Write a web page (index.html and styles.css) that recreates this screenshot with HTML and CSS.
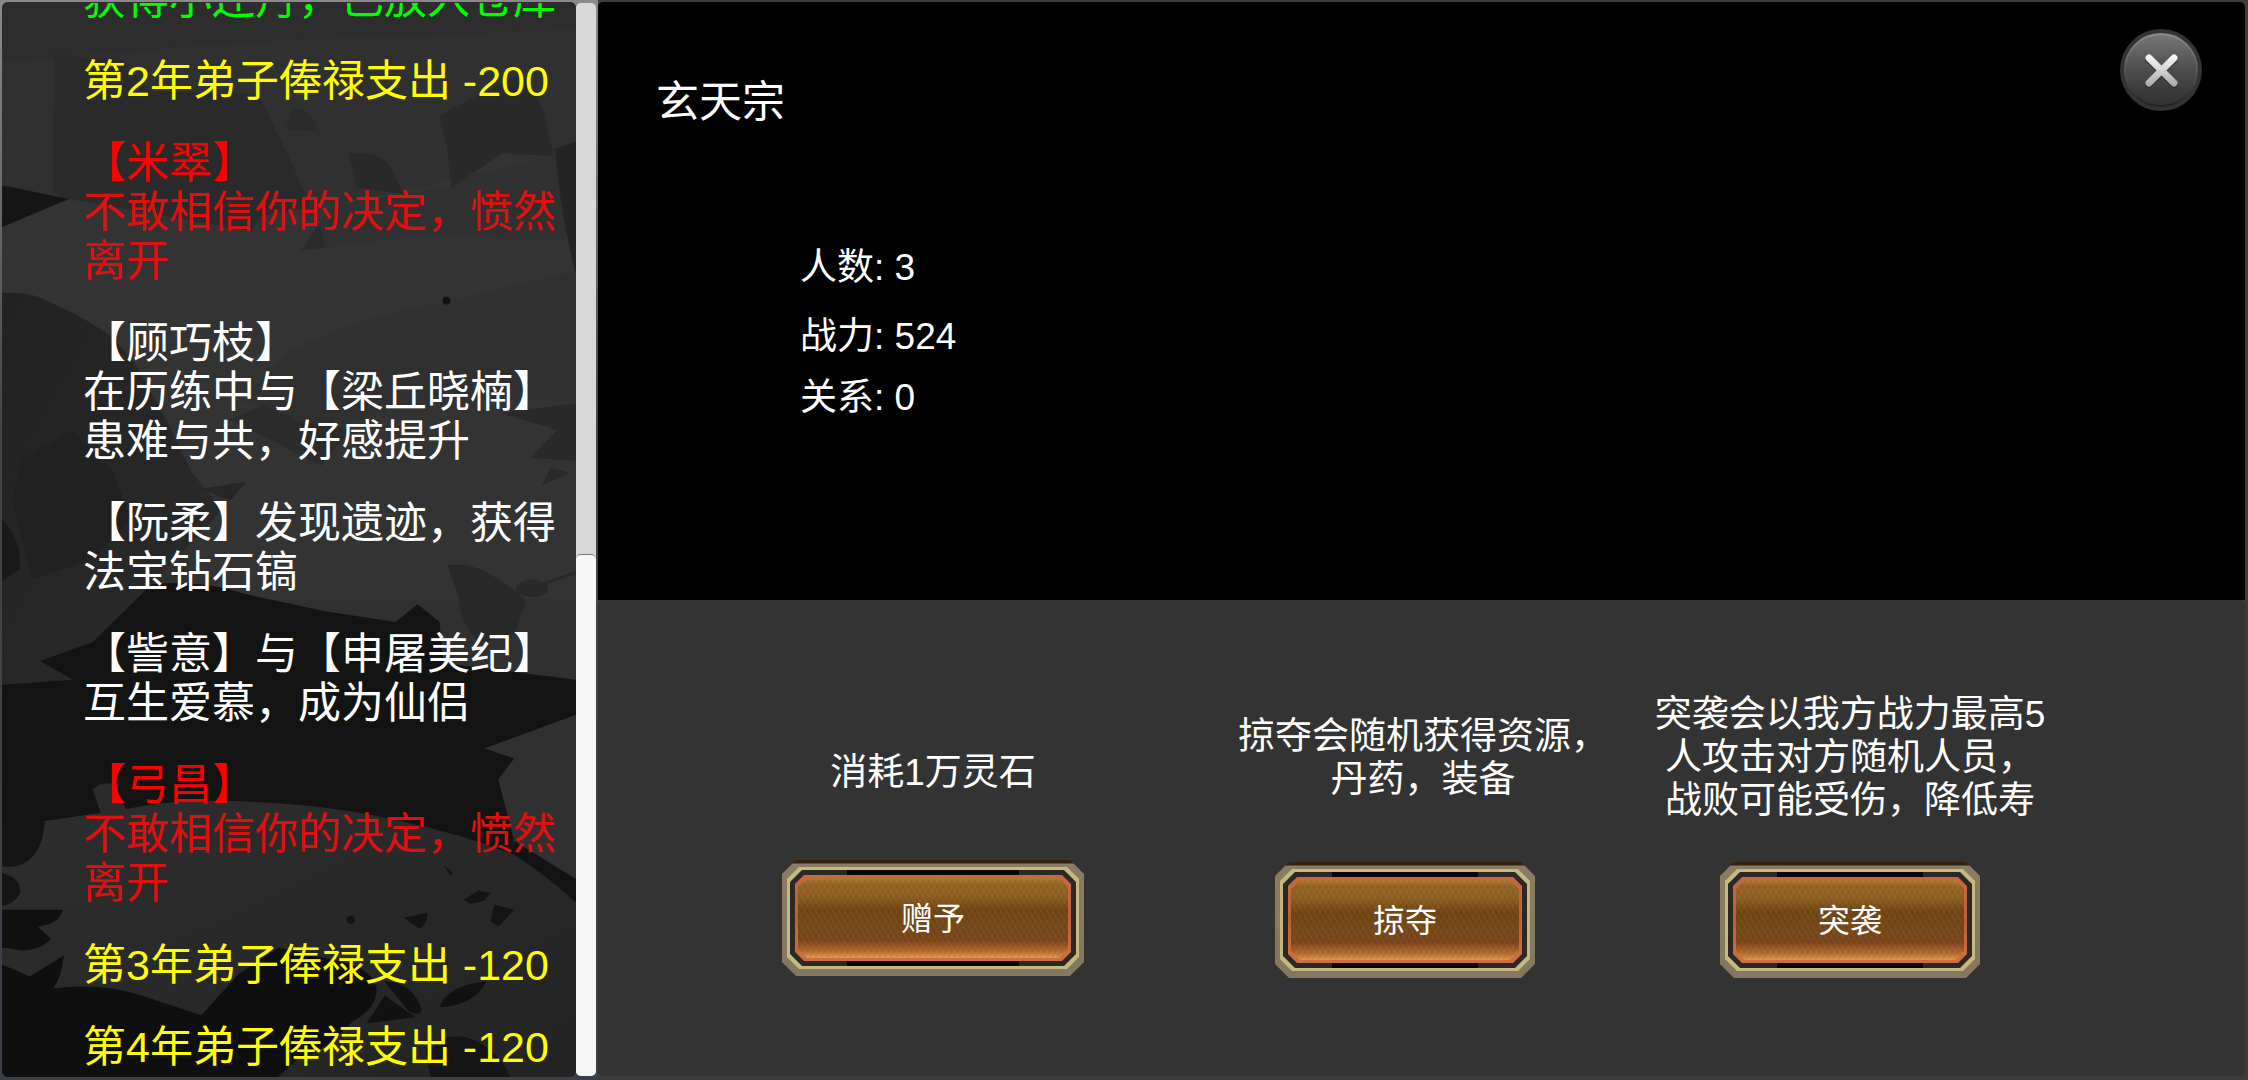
FILE: index.html
```html
<!DOCTYPE html>
<html lang="zh-CN">
<head>
<meta charset="UTF-8">
<meta name="viewport" content="width=device-width, initial-scale=1.0">
<title>玄天宗</title>
<link rel="stylesheet" href="styles.css">
</head>
<body>
<div class="game">
    <aside class="log">
        <svg class="log-art" viewBox="0 0 576 1080" preserveAspectRatio="none" aria-hidden="true">
            <defs>
                <linearGradient id="hill" x1="0" y1="0" x2="1" y2="1">
                    <stop offset="0" stop-color="#2e2e2e"/>
                    <stop offset="1" stop-color="#232323"/>
                </linearGradient>
                <linearGradient id="cliff" x1="0" y1="0" x2="1" y2="1">
                    <stop offset="0" stop-color="#222"/>
                    <stop offset="1" stop-color="#2b2b2b"/>
                </linearGradient>
            </defs>
            <rect width="576" height="1080" fill="#303030"/>
            <!-- far mountains -->
            <path fill="#2d2d2d" d="M0 0H576V28L250 40L0 60Z"/>
            <path fill="#2a2a2a" d="M53 53L120 58L150 90L257 93L290 160L320 230L345 320L200 300L52 190Z"/>
            <path fill="#333" d="M576 150L502 152L451 186L330 205L300 250L420 235L576 240V600H190L180 480L110 337L40 298L0 292V226L67 198L250 230L260 215L400 190Z"/>
            <path fill="#303030" d="M290 350Q360 315 450 300L576 270V400L420 400L330 430L240 400Z"/>
            <path fill="#292929" d="M439 114L450 108L520 72L542 105L554 155L502 152L451 186L447 150Z"/>
            <path fill="#292929" d="M348 152Q380 148 391 168L403 193L356 186Z"/>
            <path fill="#2b2b2b" d="M290 110Q308 100 318 130L285 128Z"/>
            <path fill="#242424" d="M555 148L576 140V275Q560 210 555 148Z"/>
            <path fill="#151515" d="M0 184L67 198L0 226Z"/>
            <circle cx="446" cy="300" r="4" fill="#111"/>
            <!-- cliff on the left -->
            <path fill="url(#cliff)" d="M0 292Q30 292 40 298Q90 320 110 337Q135 360 146 386Q160 410 170 430L190 472L221 510L150 585L91 643L38 662L71 681L0 686Z"/>
            <path fill="#212121" d="M20 460L70 430L110 470L130 520L90 560L30 580L10 500Z"/>
            <path fill="#2b2b2b" d="M228 420L262 405L300 422L350 430L320 466L270 440Z"/>
            <path fill="#262626" d="M200 489L245 482L229 501Z"/>
            <path fill="#292929" d="M500 413L576 403V461L530 458L557 430Z"/>
            <path fill="#292929" d="M550 468L569 473L542 486Z"/>
            <path fill="#191919" d="M0 520Q20 540 18 570L0 582Z"/>
            <!-- hanging leaf -->
            <path fill="#282828" d="M447 566Q470 562 495 578Q515 590 526 602L514 636Q500 642 478 642Q458 620 459 600Z"/>
            <ellipse cx="532" cy="589" rx="16" ry="9" fill="#292929"/>
            <path stroke="#292929" stroke-width="3" fill="none" d="M515 595L550 582L576 573"/>
            <!-- black ridge -->
            <path fill="#131313" d="M0 686L71 681L38 662L91 643L150 585Q200 580 245 595L324 612L395 623L417 605L439 623L443 664L576 681V716L484 750L514 760L498 781L514 843L576 881V905L514 857L395 822L237 803L119 812L0 829Z"/>
            <path fill="url(#hill)" d="M0 829L119 812Q170 800 237 803Q330 806 395 822Q460 835 514 857Q550 880 576 905V1080H0Z"/>
            <path fill="#2b2b2b" d="M91 791Q100 782 112 786L125 812L100 818Z"/>
            <path fill="#141414" d="M0 829L43 822Q42 845 32 857Q20 872 0 868Z"/>
            <path fill="#141414" d="M0 875Q20 880 18 896Q10 908 0 908Z"/>
            <path fill="#101010" d="M0 912L61 912Q58 926 36 929L49 941Q40 952 20 953L0 950Z"/>
            <!-- foreground foliage -->
            <path fill="#0f0f0f" d="M0 967L28 979L62 958Q60 980 51 991Q100 985 140 998L200 1018L237 977L277 950L340 964Q370 970 376 990Q376 1012 352 1024L336 1040Q310 1060 297 1062L277 1080H0Z"/>
            <path fill="#111" d="M384 984Q412 984 421 1012Q420 1020 408 1014Z"/>
            <path fill="#111" d="M439 1010Q446 988 486 984Q474 1008 439 1010Z"/>
            <path fill="#111" d="M384 998L366 1026L415 1020Z"/>
            <path fill="#151515" d="M425 1052Q450 1032 474 1043Q500 1055 510 1080H430Z"/>
            <path fill="#141414" d="M463 902L478 893L490 895L484 903L470 906Z"/>
            <path fill="#141414" d="M403 920L427 915Q428 925 419 931Z"/>
            <path fill="#141414" d="M494 907L514 912L498 929L490 923Z"/>
            <circle cx="350" cy="922" r="4" fill="#141414"/>
            <path fill="#141414" d="M444 868L452 874L450 878Z"/>
        </svg>
        <div class="log-list">
            <p class="entry gain">获得小还丹，已放入仓库</p>
            <p class="entry cost">第2年弟子俸禄支出 -200</p>
            <p class="entry leave"><span class="name">【米翠】</span><br>不敢相信你的决定，愤然离开</p>
            <p class="entry">【顾巧枝】<br>在历练中与【梁丘晓楠】患难与共，好感提升</p>
            <p class="entry">【阮柔】发现遗迹，获得法宝钻石镐</p>
            <p class="entry">【訾意】与【申屠美纪】互生爱慕，成为仙侣</p>
            <p class="entry leave"><span class="name">【弓昌】</span><br>不敢相信你的决定，愤然离开</p>
            <p class="entry cost">第3年弟子俸禄支出 -120</p>
            <p class="entry cost">第4年弟子俸禄支出 -120</p>
        </div>
        <div class="scrollbar">
            <div class="thumb"></div>
        </div>
    </aside>

    <main class="sect">
        <section class="info">
            <div class="info-text">
                <h1>玄天宗</h1>
                <ul class="stats">
                    <li>人数: 3</li>
                    <li>战力: 524</li>
                    <li>关系: 0</li>
                </ul>
            </div>
            <button class="close" aria-label="关闭">
                <svg viewBox="0 0 82 82" aria-hidden="true">
                    <defs>
                        <linearGradient id="disc" x1="0" y1="0" x2="0" y2="1">
                            <stop offset="0" stop-color="#777"/>
                            <stop offset="0.5" stop-color="#4c4c4c"/>
                            <stop offset="1" stop-color="#303030"/>
                        </linearGradient>
                        <linearGradient id="rim" x1="0" y1="0" x2="0" y2="1">
                            <stop offset="0" stop-color="#8c8c8c"/>
                            <stop offset="1" stop-color="#222"/>
                        </linearGradient>
                        <linearGradient id="cross" gradientUnits="userSpaceOnUse" x1="0" y1="24" x2="0" y2="58">
                            <stop offset="0" stop-color="#fff"/>
                            <stop offset="1" stop-color="#a8a8a8"/>
                        </linearGradient>
                    </defs>
                    <circle cx="41" cy="41" r="41" fill="#333"/>
                    <circle cx="41" cy="41" r="36" fill="url(#disc)" stroke="url(#rim)" stroke-width="2"/>
                    <path d="M29 30L54 55M54 30L29 55" stroke="#222" stroke-width="8" stroke-linecap="round" opacity="0.6"/>
                    <path d="M29 29L54 54M54 29L29 54" stroke="url(#cross)" stroke-width="7" stroke-linecap="round"/>
                </svg>
            </button>
        </section>

        <section class="actions">
            <div class="action gift">
                <p class="desc">消耗1万灵石</p>
                <button class="btn"><span class="edge"><span class="gap"><span class="line"><span class="face">赠予</span></span></span></span></button>
            </div>
            <div class="action plunder">
                <p class="desc">掠夺会随机获得资源，丹药，装备</p>
                <button class="btn"><span class="edge"><span class="gap"><span class="line"><span class="face">掠夺</span></span></span></span></button>
            </div>
            <div class="action raid">
                <p class="desc">突袭会以我方战力最高5人攻击对方随机人员，战败可能受伤，降低寿</p>
                <button class="btn"><span class="edge"><span class="gap"><span class="line"><span class="face">突袭</span></span></span></span></button>
            </div>
        </section>
    </main>
</div>
</body>
</html>
```
FILE: styles.css
```css
* {
    box-sizing: border-box;
}
body {
    margin: 0;
    background: #3c3c3c;
    color: #fff;
    font-family: "Liberation Sans", "Noto Sans CJK SC", sans-serif;
    text-spacing-trim: space-all;
}
h1, p, ul {
    margin: 0;
    padding: 0;
    font-weight: normal;
}
button {
    padding: 0;
    border: none;
    background: none;
    color: #fff;
    font-family: inherit;
    cursor: pointer;
}
.game {
    display: flex;
    height: 100vh;
}

/* event log */
.log {
    position: relative;
    display: flex;
    flex: none;
    width: 598px;
    padding: 3px 2px 4px;
    background: linear-gradient(#8a8a8a, #8a8a8a 3px, #444 40%, #39404c);
}
.log-art {
    position: absolute;
    top: 2px;
    left: 2px;
    width: 574px;
    height: calc(100% - 5px);
    border-radius: 6px;
}
.log-list {
    position: relative;
    display: flex;
    flex: 1;
    flex-direction: column;
    justify-content: flex-end;
    gap: 33px;
    padding: 0 9px 4px 81px;
    overflow: hidden;
    font-size: 43px;
    line-height: 49px;
}
.entry {
    flex: none;
}
.gain {
    color: #0f0;
}
.cost {
    color: #ff0;
}
.leave {
    color: #e01010;
}
.name {
    color: #f00;
}
.scrollbar {
    display: flex;
    flex-direction: column;
    justify-content: flex-end;
    width: 20px;
    border-radius: 5px;
    background: #d8d8d8;
    z-index: 1;
}
.thumb {
    height: 522px;
    border-top: 1px solid #777;
    border-radius: 5px;
    background: #f7f7f7;
}

/* sect panel */
.sect {
    display: grid;
    flex: 1;
    grid-template-rows: 598fr 476fr;
    padding: 2px 3px 4px 0;
}
.info {
    display: flex;
    justify-content: space-between;
    align-items: flex-start;
    padding: 27px 43px 0 58px;
    border-radius: 5px 5px 0 0;
    background: #000;
}
.info-text {
    padding-top: 49px;
}
h1 {
    font-size: 43px;
    line-height: 49px;
}
.stats {
    display: flex;
    flex-direction: column;
    gap: 18px;
    margin-top: 119px;
    padding-left: 144px;
    list-style: none;
    font-size: 37px;
    line-height: 43px;
}
.stats li:first-child {
    margin-bottom: 8px;
}
.close {
    width: 82px;
    height: 82px;
}
.close svg {
    display: block;
}
.actions {
    display: grid;
    grid-template-columns: 472fr 472fr 418fr;
    align-items: start;
    padding: 93px 186px 0 99px;
    border-radius: 5px;
    background: #333;
}
.action {
    display: flex;
    flex-direction: column;
    align-items: center;
    gap: 40px;
}
.action.gift {
    gap: 38px;
}
.desc {
    display: flex;
    align-items: center;
    justify-content: center;
    width: 396px;
    height: 129px;
    font-size: 37px;
    line-height: 43px;
    text-align: center;
}
.gift .desc {
    padding-top: 30px;
}
.plunder .desc {
    padding-left: 36px;
    width: 436px;
}

/* framed metal button */
.btn {
    width: 260px;
    height: 116px;
    padding: 7px 5px;
    background: linear-gradient(#35210f, #35210f 3px, #8b7b61 4px, #857760);
    clip-path: polygon(14px 0, calc(100% - 14px) 0, 100% 14px, 100% calc(100% - 14px), calc(100% - 14px) 100%, 14px 100%, 0 calc(100% - 14px), 0 14px);
    font-size: 32px;
}
.gift .btn {
    width: 302px;
}
.edge, .gap, .line, .face {
    display: flex;
    width: 100%;
    height: 100%;
    clip-path: polygon(12px 0, calc(100% - 12px) 0, 100% 12px, 100% calc(100% - 12px), calc(100% - 12px) 100%, 12px 100%, 0 calc(100% - 12px), 0 12px);
}
.edge {
    padding: 3px;
    background: #c4b981;
}
.gap {
    padding: 5px;
    background: linear-gradient(90deg, #2c2827 20%, #080504 20%, #080504 80%, #2c2827 80%);
}
.line {
    padding: 3px;
    background: linear-gradient(#c9683f, #b9603a 50%, #cf6f3e);
}
.face {
    justify-content: center;
    align-items: center;
    padding-bottom: 4px;
    background:
        repeating-linear-gradient(60deg, transparent 0 3px, rgba(255, 190, 80, 0.05) 3px 5px),
        repeating-linear-gradient(-60deg, transparent 0 3px, rgba(60, 20, 0, 0.06) 3px 5px),
        linear-gradient(#b07a35, #946425 8%, #8d5f23 22%, #704513 40%, #74481b 65%, #7c431c 78%, #b56c30 92%, #e09a52);
}
.line, .face {
    clip-path: polygon(9px 0, calc(100% - 9px) 0, 100% 9px, 100% calc(100% - 9px), calc(100% - 9px) 100%, 9px 100%, 0 calc(100% - 9px), 0 9px);
}
```
